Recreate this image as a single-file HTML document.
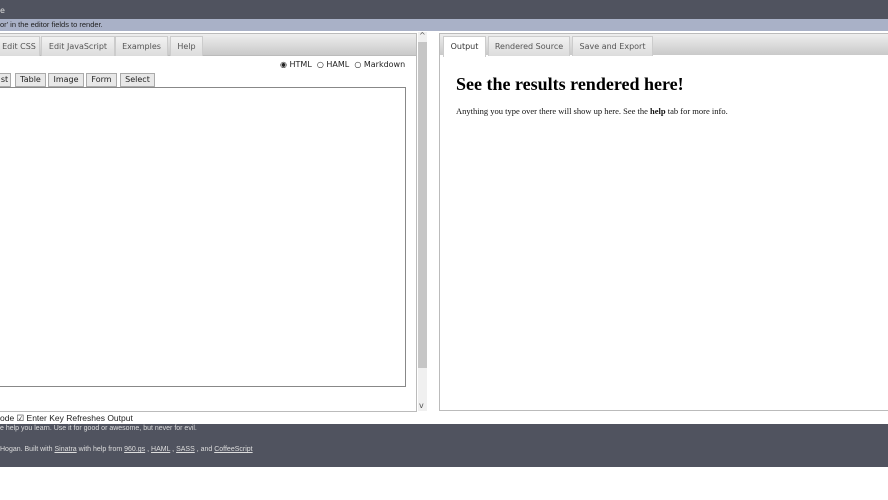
<!DOCTYPE html>
<html><head><style>
body{margin:0;width:888px;height:500px;background:#fff;position:relative;overflow:hidden;font-family:"DejaVu Sans",Verdana,sans-serif;font-size:8px;color:#333}
.a{position:absolute}
.tab{position:absolute;top:3px;height:19px;background:linear-gradient(#f2f2f2,#dcdcdc);border:1px solid #ccc;border-bottom:none;font-size:8px;color:#555;line-height:19px;text-align:center}
.btn{position:absolute;top:73px;height:12px;background:#e8e8e8;border:1px solid #aaa;font-size:8px;line-height:12px;text-align:center;color:#222}
</style></head><body>
<div class="a" style="left:0;top:0;width:888px;height:19px;background:#50535f"></div>
<div class="a" style="left:0;top:6px;color:#ddd;font-size:8px">e</div>
<div class="a" style="left:0;top:19px;width:888px;height:12px;background:#a9b1c7;font-family:'Liberation Sans',sans-serif;font-size:7.5px;line-height:12px;color:#222">or' in the editor fields to render.</div>
<div class="a" style="left:0;top:33px;width:416px;height:21px;background:linear-gradient(#eee,#c9c9c9);border:1px solid #bbb;border-left:none"></div>
<div class="tab" style="left:-2px;width:40px;top:36px">Edit CSS</div>
<div class="tab" style="left:41px;width:72px;top:36px">Edit JavaScript</div>
<div class="tab" style="left:115px;width:51px;top:36px">Examples</div>
<div class="tab" style="left:170px;width:31px;top:36px">Help</div>
<div class="a" style="left:0;top:55px;width:416px;height:356px;border-right:1px solid #bbb;border-bottom:1px solid #bbb"></div>
<div class="a" style="left:280px;top:60px;font-size:8px;color:#222">◉ HTML &nbsp;○ HAML &nbsp;○ Markdown</div>
<div class="btn" style="left:-2px;width:11px">st</div>
<div class="btn" style="left:15px;width:29px">Table</div>
<div class="btn" style="left:48px;width:34px">Image</div>
<div class="btn" style="left:86px;width:29px">Form</div>
<div class="btn" style="left:120px;width:33px">Select</div>
<div class="a" style="left:0;top:87px;width:405px;height:298px;border:1px solid #888;border-left:none"></div>
<div class="a" style="left:418px;top:32px;width:9px;height:379px;background:#f0f0f0"></div>
<div class="a" style="left:418px;top:42px;width:9px;height:326px;background:#c6c6c6"></div>
<div class="a" style="left:419px;top:31px;font-size:8px;color:#555">^</div>
<div class="a" style="left:419px;top:401px;font-size:8px;color:#555">v</div>
<div class="a" style="left:439px;top:33px;width:449px;height:378px;border:1px solid #bbb;border-right:none;box-sizing:border-box"></div>
<div class="a" style="left:440px;top:34px;width:448px;height:21px;background:linear-gradient(#eee,#c9c9c9)"></div>
<div class="tab" style="left:443px;width:41px;top:36px;background:#fff;color:#333;height:20px">Output</div>
<div class="tab" style="left:488px;width:80px;top:36px">Rendered Source</div>
<div class="tab" style="left:572px;width:79px;top:36px">Save and Export</div>
<div class="a" style="left:456px;top:74px;font-family:'Liberation Serif',serif;font-weight:bold;font-size:18px;color:#000">See the results rendered here!</div>
<div class="a" style="left:456px;top:106px;font-family:'Liberation Serif',serif;font-size:8.5px;color:#111">Anything you type over there will show up here. See the <b>help</b> tab for more info.</div>
<div class="a" style="left:0;top:413px;font-family:'Liberation Sans',sans-serif;font-size:8.5px;color:#222">ode ☑ Enter Key Refreshes Output</div>
<div class="a" style="left:0;top:424px;width:888px;height:43px;background:#50535f;font-family:'Liberation Sans',sans-serif;font-size:7px;color:#ddd">
<div class="a" style="left:0;top:1px">e help you learn. Use it for good or awesome, but never for evil.</div>
<div class="a" style="left:0;top:22px">Hogan. Built with <u>Sinatra</u> with help from <u>960.gs</u> , <u>HAML</u> , <u>SASS</u> , and <u>CoffeeScript</u></div>
</div>
</body></html>
